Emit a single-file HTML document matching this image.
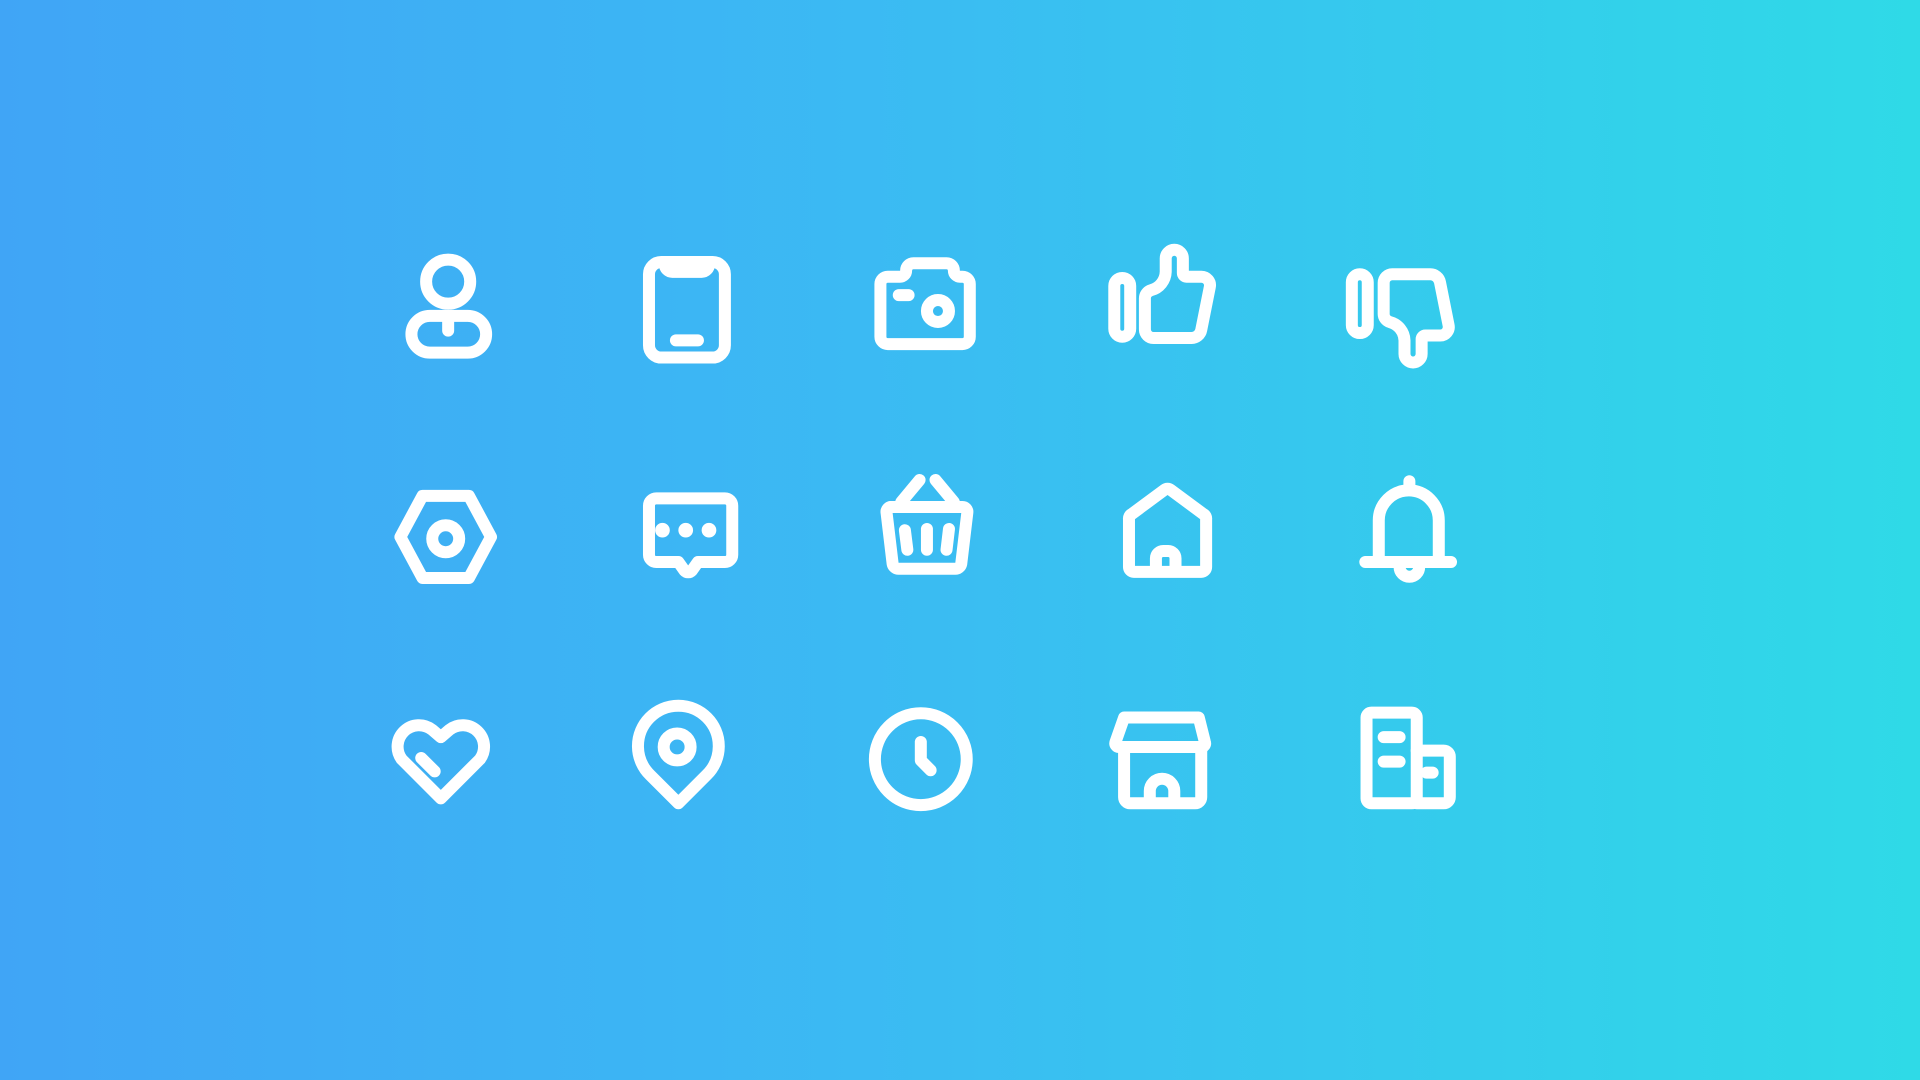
<!DOCTYPE html>
<html><head><meta charset="utf-8"><style>
html,body{margin:0;padding:0;width:1920px;height:1080px;overflow:hidden}
body{background:linear-gradient(90deg,#40a5f6 0%,#3bbaf3 45%,#2fdae7 100%)}
svg{position:absolute;left:0;top:0}
</style></head><body>
<svg width="1920" height="1080" viewBox="0 0 1568 882" preserveAspectRatio="none" fill="none" stroke="#fff" stroke-width="9.8" stroke-linecap="round" stroke-linejoin="round">
<!-- person -->
<circle cx="366" cy="230" r="18"/>
<rect x="336" y="258" width="61" height="30" rx="15"/>
<path d="M366 258v12"/>
<!-- phone -->
<rect x="530" y="214" width="62" height="78" rx="10"/>
<path d="M543 214v2a6 6 0 0 0 6 6h24a6 6 0 0 0 6-6v-2z" fill="#fff"/>
<path d="M552 278h18"/>
<!-- camera -->
<path d="M719 232a6 6 0 0 1 6-6h10a5 5 0 0 0 5-5a6 6 0 0 1 6-6h27a6 6 0 0 1 6 6a5 5 0 0 0 5 5h2a6 6 0 0 1 6 6v43a6 6 0 0 1-6 6h-61a6 6 0 0 1-6-6z"/>
<circle cx="766" cy="254" r="9"/>
<path d="M734 241h8"/>
<!-- thumbs up -->
<rect x="910" y="227" width="13" height="48" rx="6.5"/>
<path d="M935 244a7 7 0 0 1 5-7a16 16 0 0 0 12-15v-11a7 7 0 0 1 14 0v12a3 3 0 0 0 3 3h12a7 7 0 0 1 7 8.5l-7 35a8 8 0 0 1-8 6.5h-31a7 7 0 0 1-7-7z"/>
<!-- thumbs down -->
<rect x="1104" y="224" width="13" height="48" rx="6.5"/>
<path transform="translate(195,500) scale(1,-1)" d="M935 244a7 7 0 0 1 5-7a16 16 0 0 0 12-15v-11a7 7 0 0 1 14 0v12a3 3 0 0 0 3 3h12a7 7 0 0 1 7 8.5l-7 35a8 8 0 0 1-8 6.5h-31a7 7 0 0 1-7-7z"/>
<!-- hexagon -->
<polygon points="327,438.5 345,405 383,405 401,438.5 383,472 345,472"/>
<circle cx="364" cy="440" r="11"/>
<!-- chat -->
<path d="M536 407h56a6 6 0 0 1 6 6v40a6 6 0 0 1-6 6h-22l-5 7a4 4 0 0 1-6 0l-5-7h-18a6 6 0 0 1-6-6v-40a6 6 0 0 1 6-6z"/>
<g fill="#fff" stroke="none"><circle cx="541" cy="433" r="6"/><circle cx="560" cy="433" r="6"/><circle cx="579" cy="433" r="6"/></g>
<!-- basket -->
<path d="M751 392l-15 18M764 392l15 18"/>
<path d="M727 414h59a4 4 0 0 1 4 4.5l-5 42a5 5 0 0 1-5 4h-46a5 5 0 0 1-5-4l-5-42a4 4 0 0 1 4-4.5z"/>
<path d="M739 433l2 16M757 432v17M775 432l-2 17"/>
<!-- house -->
<path d="M922 424a4 4 0 0 1 2-4l27-20a4 4 0 0 1 5 0l27 20a4 4 0 0 1 2 4v39a4 4 0 0 1-4 4h-55a4 4 0 0 1-4-4z"/>
<path d="M944 464v-8a6 6 0 0 1 6-6h4a6 6 0 0 1 6 6v8"/>
<!-- bell -->
<path d="M1126 459v-34a24.5 24.5 0 0 1 49 0v34"/>
<path d="M1151 393v3M1115 459h70M1143 463a8 8 0 0 0 16 0"/>
<!-- heart -->
<path d="M360 652L328 620A17.5 17.5 0 0 1 353 596L360 602L367 596A17.5 17.5 0 0 1 392 620Z"/>
<path d="M344 619l11 11"/>
<!-- pin -->
<path d="M554 656l-23-23a33 33 0 1 1 46 0z"/>
<circle cx="553" cy="610" r="11"/>
<!-- clock -->
<circle cx="752" cy="620" r="37.5"/>
<path d="M752 606v15l8 8"/>
<!-- shop -->
<path d="M918 586h61l5 20a3 3 0 0 1-3 4h-67a3 3 0 0 1-3-4z"/>
<path d="M918 612v39a5 5 0 0 0 5 5h53a5 5 0 0 0 5-5v-39"/>
<path d="M939 654v-8a10 10 0 0 1 20 0v8"/>
<!-- buildings -->
<rect x="1116" y="582" width="41" height="74" rx="4"/>
<path d="M1157 613h22a5 5 0 0 1 5 5v33a5 5 0 0 1-5 5h-22"/>
<path d="M1130 602h13M1130 622h13M1165 631h5"/>
</svg>
</body></html>
